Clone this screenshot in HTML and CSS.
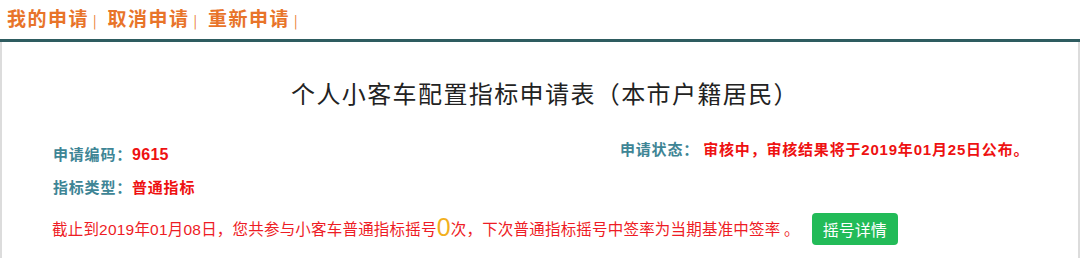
FILE: index.html
```html
<!DOCTYPE html>
<html lang="zh-CN">
<head>
    <meta charset="UTF-8">
    <meta name="viewport" content="width=device-width, initial-scale=1.0">
    <title>个人小客车配置指标申请表</title>
    <link rel="stylesheet" href="styles.css">
</head>
<body>
    <nav class="nav">
        <a href="#">我的申请</a><span class="sep">|</span>
        <a href="#">取消申请</a><span class="sep">|</span>
        <a href="#">重新申请</a><span class="sep">|</span>
    </nav>
    <main class="card">
        <h1>个人小客车配置指标申请表（本市户籍居民）</h1>
        <div class="info">
            <div class="info-left">
                <p><span class="label">申请编码：</span><span class="value num">9615</span></p>
                <p><span class="label">指标类型：</span><span class="value">普通指标</span></p>
            </div>
            <div class="info-right">
                <p><span class="label">申请状态：</span> <span class="value">审核中，审核结果将于<span class="num">2019</span>年<span class="num">01</span>月<span class="num">25</span>日公布。</span></p>
            </div>
        </div>
        <div class="notice">
            <p>截止到<span class="num">2019</span>年<span class="num">01</span>月<span class="num">08</span>日，您共参与小客车普通指标摇号<span class="big">0</span>次，下次普通指标摇号中签率为当期基准中签率 。</p>
            <button>摇号详情</button>
        </div>
    </main>
</body>
</html>
```

FILE: styles.css
```css
* {
    box-sizing: border-box;
    margin: 0;
    padding: 0;
}

body {
    font-family: "Noto Sans CJK SC", "Liberation Sans", sans-serif;
    background-color: #fff;
}

.num {
    font-family: "Liberation Sans", "Noto Sans CJK SC", sans-serif;
}

/* top links */
.nav {
    height: 42px;
    display: flex;
    align-items: center;
    padding: 0 0 4px 7px;
    border-bottom: 3px solid #2e5c60;
}

.nav a {
    color: #e8742a;
    font-size: 19px;
    font-weight: bold;
    text-decoration: none;
    letter-spacing: 1.5px;
}

.nav .sep {
    color: #e8742a;
    font-size: 13px;
    margin: 5px 11px 0 4px;
}

.card {
    border-left: 2px solid #dcdcdc;
    border-right: 2px solid #dcdcdc;
    height: 216px;
    padding-top: 35px;
}

h1 {
    text-align: center;
    font-size: 24px;
    font-weight: normal;
    line-height: 32px;
    color: #222;
    letter-spacing: 1.4px;
    padding-left: 10px;
}

.info {
    display: flex;
    margin-top: 29px;
    padding-left: 51px;
}

.info-left {
    width: 567px;
}

.info-right {
    margin-top: -5px;
}

.info p {
    line-height: 32px;
    font-size: 15px;
    font-weight: bold;
    letter-spacing: 0.8px;
}

.label {
    color: #3e8595;
}

.value {
    color: #ee1111;
}

.info .value.num {
    font-size: 16px;
    letter-spacing: 0.3px;
}

.notice {
    display: flex;
    align-items: center;
    margin-top: 8px;
    padding-left: 50px;
}

.notice p {
    color: #ee1c25;
    font-size: 15.5px;
    letter-spacing: 0.2px;
    line-height: 32px;
}

.big {
    font-family: "Liberation Sans", sans-serif;
    color: #f2b01e;
    font-size: 25px;
    vertical-align: -1px;
}

button {
    margin-left: 12px;
    width: 86px;
    height: 32px;
    background-color: #22bb58;
    color: white;
    border: none;
    border-radius: 4px;
    font-family: "Noto Sans CJK SC", sans-serif;
    font-size: 16px;
    cursor: pointer;
}
```
